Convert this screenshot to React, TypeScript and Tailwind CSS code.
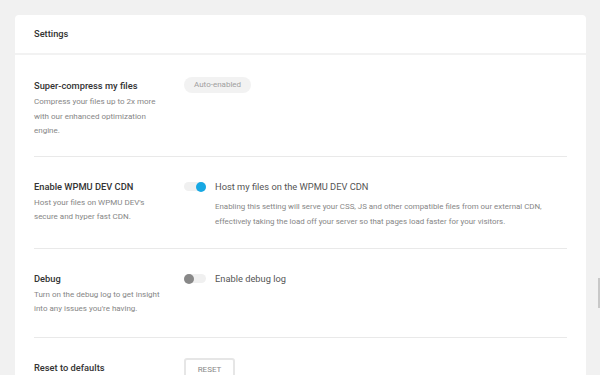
import React from "react";

const font = { fontFamily: "Roboto, 'Noto Sans', sans-serif" };

function Toggle({ on }: { on: boolean }) {
  return (
    <div className="relative w-[22px] h-[12px] flex items-center shrink-0">
      <div className="w-[22px] h-[9px] rounded-full bg-[#f0f0f0]" />
      <div
        className={
          on
            ? "absolute right-0 top-[1px] w-[10px] h-[10px] rounded-full bg-[#17a8e3]"
            : "absolute left-0 top-[1px] w-[10px] h-[10px] rounded-full bg-[#888888]"
        }
      />
    </div>
  );
}

function Left({ title, children }: { title: string; children: React.ReactNode }) {
  return (
    <div className="w-[150px] shrink-0 pr-[16px]">
      <div className="text-[9.3px] leading-[14px] font-medium text-[#333]">{title}</div>
      <div className="mt-[2px] text-[8px] leading-[14.6px] text-[#868686]">{children}</div>
    </div>
  );
}

export default function App() {
  return (
    <div className="h-[375px] w-[600px] bg-[#f1f1f1] pt-[15px] pl-[15px] pr-[14px] overflow-hidden relative" style={font}>
      <div className="bg-white rounded-[4px] h-[380px]">
        <div className="h-[40px] flex items-center px-[19px] border-b-2 border-[#f2f2f2]">
          <span className="text-[9.3px] font-medium text-[#333]">Settings</span>
        </div>
        <div className="px-[19px]">
          <div className="flex pt-[24px] pb-[17px] border-b border-[#e9e9e9]">
            <Left title="Super-compress my files">
              Compress your files up to 2x more with our enhanced optimization engine.
            </Left>
            <div className="flex items-start -mt-[2px]">
              <span className="flex items-center justify-center h-[16px] px-[10px] rounded-full bg-[#f2f2f2] text-[8px] leading-none text-[#a0a0a0]">
                Auto-enabled
              </span>
            </div>
          </div>
          <div className="flex pt-[23px] pb-[19px] border-b border-[#e9e9e9]">
            <Left title="Enable WPMU DEV CDN">
              Host your files on WPMU DEV's secure and hyper fast CDN.
            </Left>
            <div className="flex-1">
              <div className="flex items-center gap-[9px]">
                <Toggle on />
                <span className="text-[9.3px] leading-[14px] text-[#555]">Host my files on the WPMU DEV CDN</span>
              </div>
              <div className="pl-[31px] mt-[5px] text-[7.9px] leading-[15px] text-[#868686]">
                Enabling this setting will serve your CSS, JS and other compatible files from our external CDN, effectively taking the load off your server so that pages load faster for your visitors.
              </div>
            </div>
          </div>
          <div className="flex pt-[23px] pb-[20px] border-b border-[#e9e9e9]">
            <Left title="Debug">
              Turn on the debug log to get insight into any issues you're having.
            </Left>
            <div className="flex-1">
              <div className="flex items-center gap-[9px]">
                <Toggle on={false} />
                <span className="text-[9.3px] leading-[14px] text-[#555]">Enable debug log</span>
              </div>
            </div>
          </div>
          <div className="flex pt-[17px]">
            <div className="w-[150px] shrink-0 pt-[6px]">
              <div className="text-[9.3px] leading-[14px] font-medium text-[#333]">Reset to defaults</div>
            </div>
            <div>
              <button className="w-[51px] h-[24px] border-2 border-[#e6e6e6] rounded-[3px] text-[8px] text-[#888] bg-white">
                RESET
              </button>
            </div>
          </div>
        </div>
      </div>
      <div className="absolute right-0 top-[278px] w-[2px] h-[30px] bg-[#c8c8c8]" />
    </div>
  );
}
